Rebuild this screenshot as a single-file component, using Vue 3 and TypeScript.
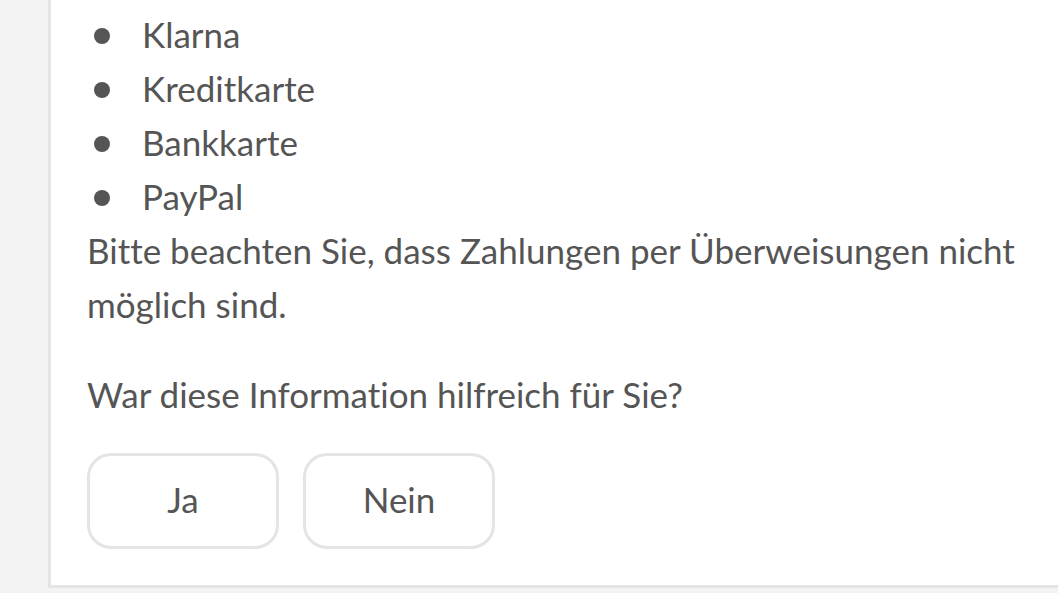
<script setup lang="ts">
const methods: string[] = ['Klarna', 'Kreditkarte', 'Bankkarte', 'PayPal']
const answers: string[] = ['Ja', 'Nein']
</script>

<template>
  <main class="page">
    <section class="card">
      <ul class="methods">
        <li v-for="m in methods" :key="m">{{ m }}</li>
      </ul>
      <p class="note">Bitte beachten Sie, dass Zahlungen per Überweisungen nicht möglich sind.</p>
      <p id="question" class="question">War diese Information hilfreich für Sie?</p>
      <div class="answers" role="group" aria-labelledby="question">
        <button v-for="a in answers" :key="a" type="button">{{ a }}</button>
      </div>
    </section>
  </main>
</template>

<style>
body {
  background: #f3f3f3;
}
</style>

<style scoped>
.page {
  padding: 0 0 5px 48px;
  color: #555;
  font-family: Lato, "Liberation Sans", Arial, sans-serif;
  font-size: 35px;
  font-variant-ligatures: none;
  line-height: 54px;
}
.card {
  padding: 7px 36px 36px;
  background: #fff;
  border: 3px solid #e4e4e4;
  border-top: 0;
  border-right: 0;
}
.methods {
  margin: 0;
  padding: 0;
  list-style: none;
}
.methods li {
  display: flex;
  align-items: center;
  gap: 32px;
  padding-left: 7px;
}
.methods li::before {
  content: "";
  width: 16px;
  height: 16px;
  margin-top: 4px;
  border-radius: 50%;
  background: #555;
}
.note {
  margin: 0;
}
.question {
  margin: 36px 0 32px;
}
.answers {
  display: flex;
  gap: 24px;
}
.answers button {
  width: 192px;
  height: 96px;
  padding: 0 0 4px;
  background: #fff;
  border: 3px solid #e4e4e4;
  border-radius: 24px;
  color: inherit;
  font: inherit;
  font-variant-ligatures: none;
  cursor: pointer;
}
</style>
